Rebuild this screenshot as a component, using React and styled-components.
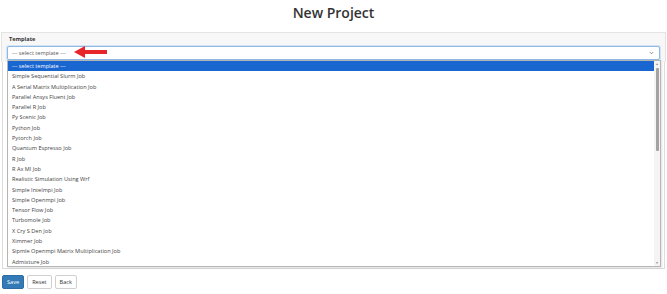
import React from "react";
import styled, { createGlobalStyle } from "styled-components";

const Global = createGlobalStyle`
  html, body { margin: 0; padding: 0; background: #fff; }
  body { font-family: "Open Sans", "Noto Sans", "Liberation Sans", sans-serif; color: #333; }
`;

const Page = styled.div`
  width: 667px;
  height: 294px;
  display: flex;
  flex-direction: column;
  overflow: hidden;
`;

const Title = styled.h1`
  margin: 0;
  height: 32px;
  display: flex;
  align-items: center;
  justify-content: center;
  font-size: 14px;
  font-weight: 600;
  color: #333;
  padding-bottom: 7px;
  box-sizing: border-box;
`;

const Panel = styled.div`
  margin: 0 1px;
  background: #f7f7f7;
  border: 1px solid #e4e4e4;
  border-bottom: none;
  padding: 2px 5px 3px 5px;
  height: 30px;
  box-sizing: border-box;
  position: relative;
  z-index: 2;
`;

const Label = styled.div`
  font-size: 5.6px;
  font-weight: 700;
  color: #333;
  height: 11px;
  line-height: 9px;
  padding-left: 2px;
`;

const SelectWrap = styled.div`
  position: relative;
`;

const SelectBox = styled.div`
  height: 14px;
  box-sizing: border-box;
  border: 1px solid #8fb8e3;
  border-radius: 2px;
  background: #fff;
  display: flex;
  align-items: center;
  justify-content: space-between;
  padding: 0 5px 0 4px;
  font-size: 5.6px;
  color: #555;
  box-shadow: 0 0 0 1px rgba(102, 175, 233, 0.25);
`;

const Chevron = styled.svg`
  width: 5px;
  height: 4px;
`;

const Pointer = styled.svg`
  position: absolute;
  left: 67px;
  top: -1px;
  width: 34px;
  height: 14px;
`;

const Dropdown = styled.div`
  position: absolute;
  left: 0;
  top: 14px;
  width: 654px;
  height: 207px;
  box-sizing: border-box;
  border: 1px solid #b5b5b5;
  background: #fff;
  display: flex;
  box-shadow: 1px 1px 2px rgba(0, 0, 0, 0.12);
`;

const List = styled.div`
  flex: 1;
  display: flex;
  flex-direction: column;
`;

const Option = styled.div`
  height: 10.3px;
  line-height: 10.3px;
  padding-left: 4px;
  font-size: 5.6px;
  color: ${(p) => (p.$active ? "#fff" : "#444")};
  background: ${(p) => (p.$active ? "#1a66d0" : "transparent")};
  white-space: nowrap;
`;

const Scrollbar = styled.div`
  width: 6px;
  display: flex;
  flex-direction: column;
  align-items: center;
  background: #f4f4f4;
`;

const ScrollArrow = styled.div`
  height: 6px;
  width: 6px;
  display: flex;
  align-items: center;
  justify-content: center;
  font-size: 3px;
  color: #777;
`;

const Track = styled.div`
  flex: 1;
  width: 100%;
  display: flex;
  justify-content: center;
  padding-top: 1px;
`;

const Thumb = styled.div`
  width: 3px;
  height: 83px;
  background: #a3a3a3;
  border-radius: 1px;
`;

const Body = styled.div`
  margin: 0 2px;
  height: 207px;
  border: 1px solid #dcdcdc;
  border-top: none;
  background: #fff;
  box-sizing: border-box;
`;

const Actions = styled.div`
  display: flex;
  gap: 3px;
  padding: 6px 0 0 2px;
`;

const Button = styled.button`
  height: 14px;
  padding: 0 4px;
  font-family: inherit;
  font-size: 5.6px;
  border-radius: 2px;
  border: 1px solid ${(p) => (p.$primary ? "#2e6da4" : "#d0d0d0")};
  background: ${(p) => (p.$primary ? "#337ab7" : "#fff")};
  color: ${(p) => (p.$primary ? "#fff" : "#333")};
  cursor: pointer;
`;

const options = [
  "Simple Sequential Slurm Job",
  "A Serial Matrix Multiplication Job",
  "Parallel Ansys Fluent Job",
  "Parallel R Job",
  "Py Scenic Job",
  "Python Job",
  "Pytorch Job",
  "Quantum Espresso Job",
  "R Job",
  "R Ax Ml Job",
  "Realistic Simulation Using Wrf",
  "Simple Intelmpi Job",
  "Simple Openmpi Job",
  "Tensor Flow Job",
  "Turbomole Job",
  "X Cry S Den Job",
  "Ximmer Job",
  "Sipmle Openmpi Matrix Multiplication Job",
  "Admixture Job",
];

export default function App() {
  return (
    <Page>
      <Global />
      <Title>New Project</Title>
      <Panel>
        <Label>Template</Label>
        <SelectWrap>
          <SelectBox>
            <span>--- select template ---</span>
            <Chevron viewBox="0 0 10 8">
              <path d="M1.5 2 L5 5.5 L8.5 2" fill="none" stroke="#666" strokeWidth="1.4" />
            </Chevron>
          </SelectBox>
          <Pointer viewBox="0 0 34 14">
            <path d="M7 7 H33" stroke="#e8262a" strokeWidth="4" />
            <path d="M0 7 L11 1 L11 13 Z" fill="#e8262a" />
          </Pointer>
          <Dropdown>
            <List>
              <Option $active>--- select template ---</Option>
              {options.map((o) => (
                <Option key={o}>{o}</Option>
              ))}
            </List>
            <Scrollbar>
              <ScrollArrow>▲</ScrollArrow>
              <Track>
                <Thumb />
              </Track>
              <ScrollArrow>▼</ScrollArrow>
            </Scrollbar>
          </Dropdown>
        </SelectWrap>
      </Panel>
      <Body />
      <Actions>
        <Button $primary>Save</Button>
        <Button>Reset</Button>
        <Button>Back</Button>
      </Actions>
    </Page>
  );
}
